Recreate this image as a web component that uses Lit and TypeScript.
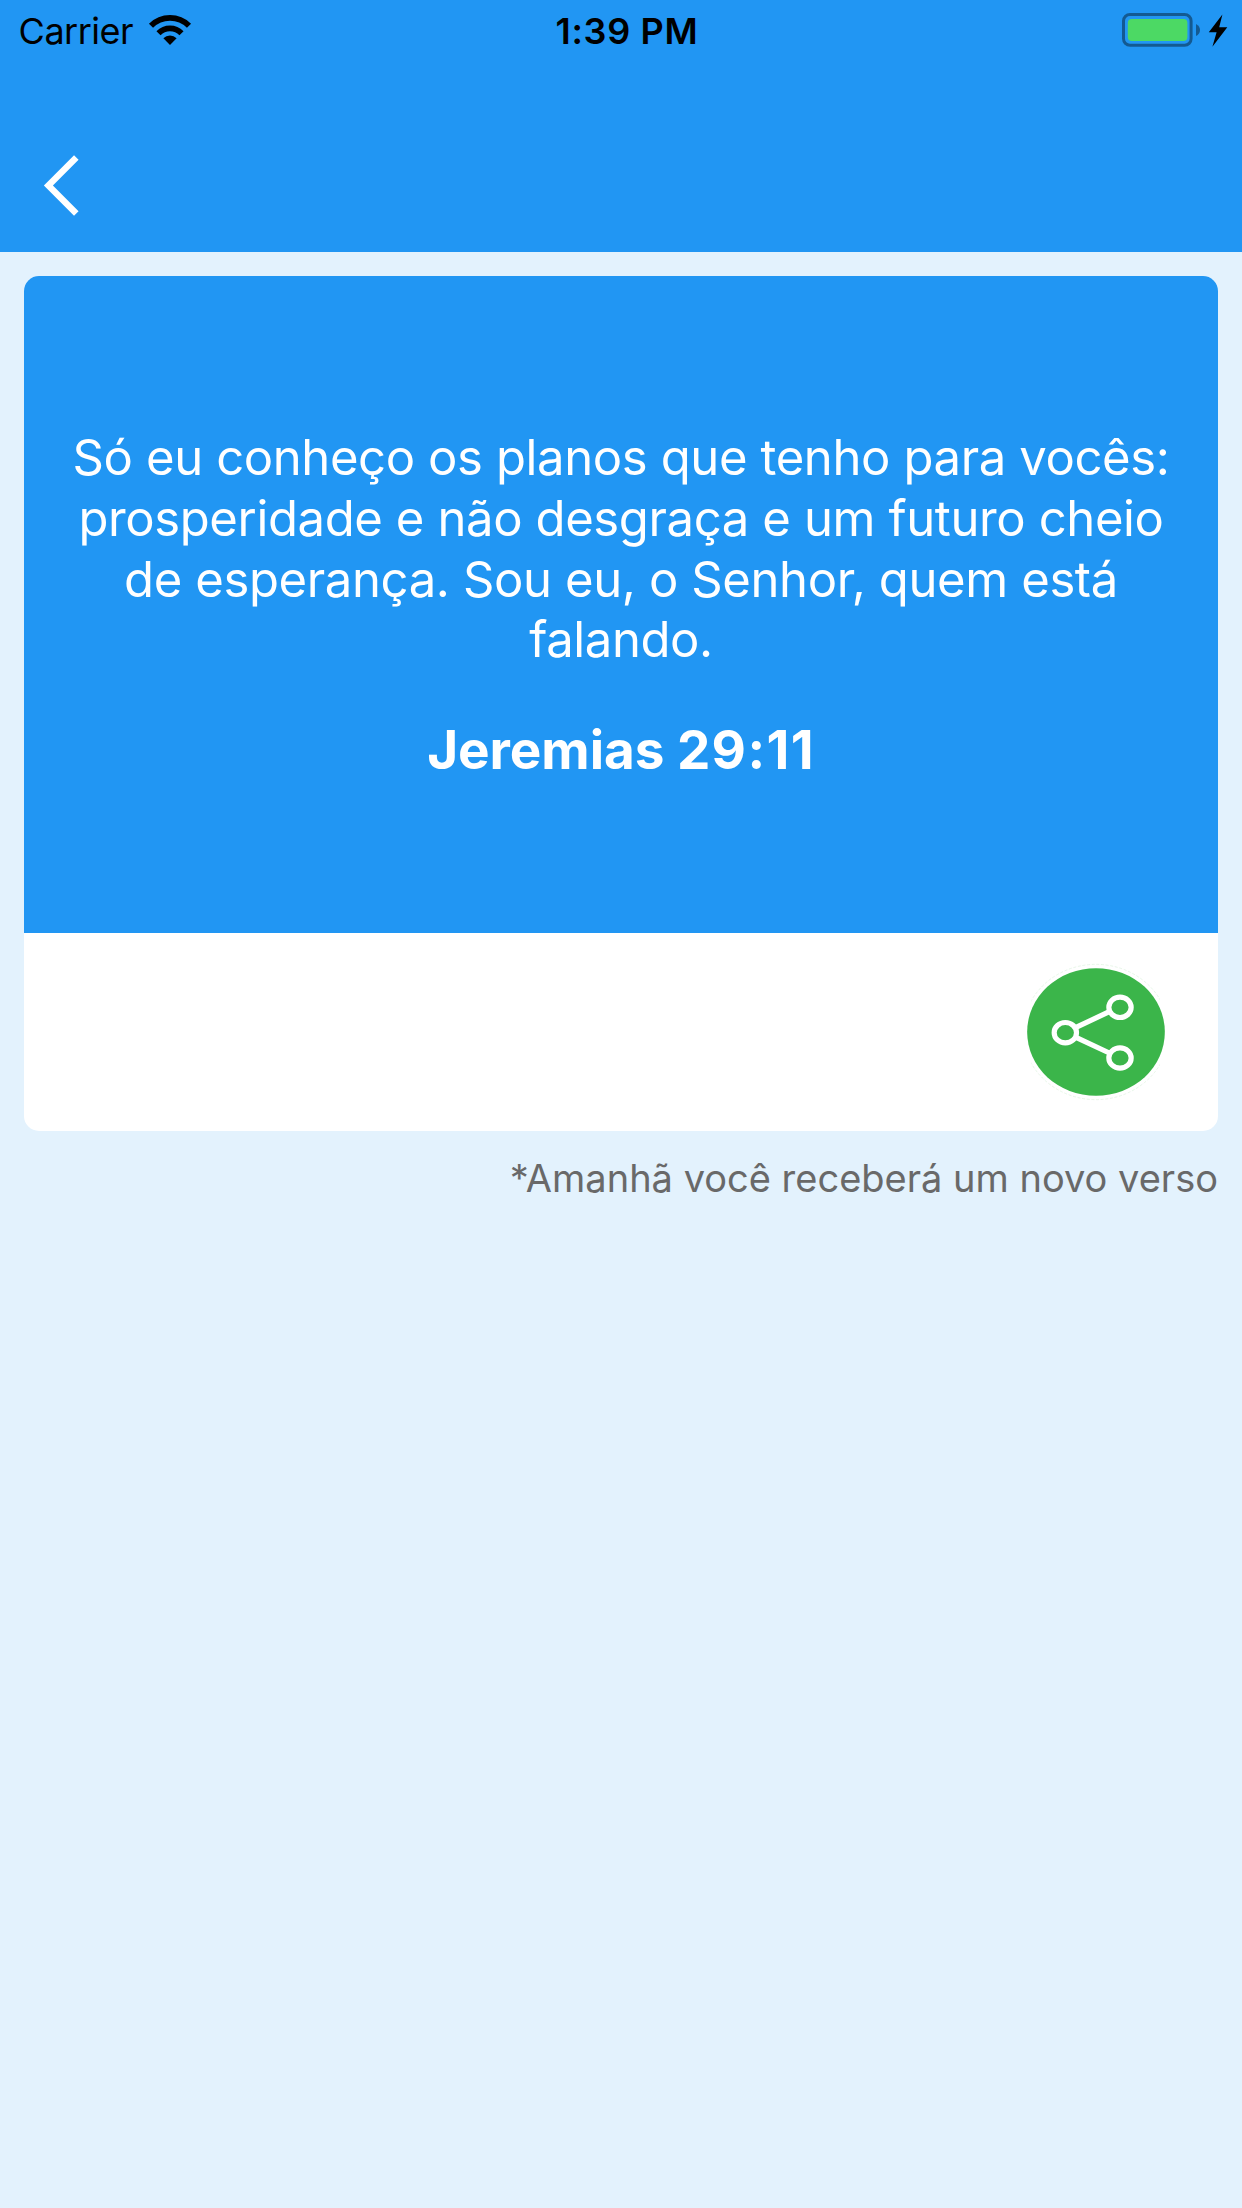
import { LitElement, html, css } from "lit";
import { customElement, property } from "lit/decorators.js";

@customElement("status-bar")
class StatusBar extends LitElement {
  static styles = css`
    :host {
      display: grid;
      grid-template-columns: 555.5px 1fr auto;
      height: 62px;
      box-sizing: border-box;
      padding: 9px 13px 0 0;
      color: #000;
      font-size: 36px;
      line-height: 44px;
    }
    .network {
      display: flex;
      padding-left: 18.6px;
      gap: 15px;
    }
    .carrier {
      letter-spacing: -0.5px;
    }
    .wifi {
      display: block;
      width: 44px;
      height: 34px;
      margin-top: 4px;
    }
    .time {
      font-weight: 600;
      letter-spacing: 0.68px;
    }
    .battery {
      display: block;
      width: 108px;
      height: 40px;
      margin-top: 1px;
    }
  `;

  render() {
    return html`
      <div class="network">
        <span class="carrier">Carrier</span>
        <svg class="wifi" viewBox="149 13 44 34">
          <g fill="none" stroke="#000" stroke-width="5.8">
            <path d="M152 25.7A26.9 26.9 0 0 1 190 25.7" />
            <path d="M159.5 33.2A16.3 16.3 0 0 1 182.5 33.2" />
          </g>
          <path d="M171 45L164.4 38.3A9.3 9.3 0 0 1 177.6 38.3Z" />
        </svg>
      </div>
      <span class="time">1:39 PM</span>
      <svg class="battery" viewBox="1121 10 108 40">
        <rect x="1123.5" y="14.5" width="67.6" height="30.8" rx="6.5" fill="none" stroke="#000" stroke-opacity=".4" stroke-width="3" />
        <rect x="1127.8" y="19" width="59.6" height="22" rx="4" fill="#4cd964" />
        <path d="M1196 24Q1200 26 1200 30T1196 36Z" fill-opacity=".4" />
        <path d="M1222.4 14.4L1208.8 32.3H1216.6L1212.4 46.8L1227.3 27.2H1219.2Z" />
      </svg>
    `;
  }
}

@customElement("share-button")
class ShareButton extends LitElement {
  static styles = css`
    :host {
      display: block;
    }
    .icon {
      display: block;
      width: 140px;
      height: 138px;
    }
  `;

  render() {
    return html`
      <svg class="icon" viewBox="48 129 420 414">
        <svg x="64" y="129" width="386" height="414" viewBox="64 129 386 414">
          <ellipse cx="258" cy="336" rx="219" ry="203" fill="none" stroke="#dcf1de" stroke-width="2" stroke-dasharray="9 5" />
        </svg>
        <ellipse cx="258" cy="336" rx="206.5" ry="191.5" fill="#3bb54a" />
        <g fill="none" stroke="#fff" stroke-width="15.5">
          <path d="M198 322L298 275M198 352L298 399" />
          <ellipse cx="166" cy="338" rx="33.5" ry="30.5" />
          <ellipse cx="330" cy="262" rx="33.5" ry="30.5" />
          <ellipse cx="330" cy="414" rx="33.5" ry="30.5" />
        </g>
      </svg>
    `;
  }
}

@customElement("verse-card")
class VerseCard extends LitElement {
  static styles = css`
    :host {
      display: block;
      border-radius: 15px;
      overflow: hidden;
      background: #fff;
    }
    .verse {
      height: 657px;
      box-sizing: border-box;
      padding-top: 152px;
      background: #2196f3;
      color: #fff;
      text-align: center;
    }
    .text {
      margin: 0;
      font-size: 49px;
      line-height: 60.8px;
      letter-spacing: -0.38px;
    }
    .line {
      display: block;
      white-space: nowrap;
    }
    .reference {
      margin: 47px 0 0;
      font-size: 53px;
      font-weight: 700;
      line-height: 64px;
    }
    .book {
      letter-spacing: -0.05px;
    }
    .passage {
      letter-spacing: 1.35px;
    }
    .actions {
      display: flex;
      align-items: center;
      justify-content: flex-end;
      height: 198px;
      box-sizing: border-box;
      padding-right: 52px;
    }
  `;

  @property({ attribute: false }) lines: string[] = [];
  @property() book = "";
  @property() passage = "";

  render() {
    return html`
      <div class="verse">
        <p class="text">${this.lines.map((line) => html`<span class="line">${line}</span>`)}</p>
        <p class="reference"><span class="book">${this.book} </span><span class="passage">${this.passage}</span></p>
      </div>
      <div class="actions"><share-button></share-button></div>
    `;
  }
}

@customElement("app-root")
class AppRoot extends LitElement {
  static styles = css`
    :host {
      display: block;
      min-height: 100vh;
      background: #e3f2fd;
      font-family: "Inter", "Liberation Sans", sans-serif;
    }
    .header {
      height: 252px;
      background: #2196f3;
    }
    .nav {
      display: flex;
      padding: 88px 0 0 40px;
    }
    .back {
      display: block;
      width: 44px;
      height: 70px;
    }
    .content {
      padding: 24px;
    }
    .note {
      margin: 24px 0 0;
      color: #696969;
      font-size: 38px;
      line-height: 46px;
      text-align: right;
    }
  `;

  private lines = [
    "Só eu conheço os planos que tenho para vocês:",
    "prosperidade e não desgraça e um futuro cheio",
    "de esperança. Sou eu, o Senhor, quem está",
    "falando.",
  ];

  render() {
    return html`
      <header class="header">
        <status-bar></status-bar>
        <div class="nav">
          <svg class="back" viewBox="40 150 44 70">
            <path d="M76.3 157.4L48.4 185.4L76.3 213.4" fill="none" stroke="#fff" stroke-width="6.4" />
          </svg>
        </div>
      </header>
      <main class="content">
        <verse-card .lines=${this.lines} book="Jeremias" passage="29:11"></verse-card>
        <p class="note">*Amanhã você receberá um novo verso</p>
      </main>
    `;
  }
}
